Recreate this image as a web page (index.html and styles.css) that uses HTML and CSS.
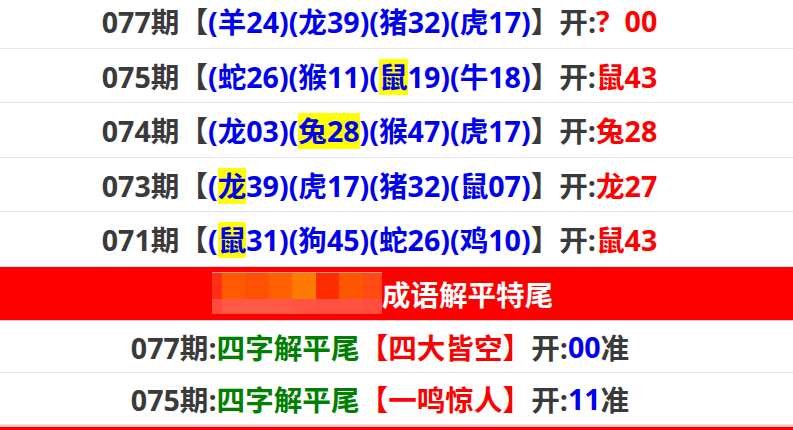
FILE: index.html
```html
<!DOCTYPE html>
<html lang="zh-CN">
<head>
<meta charset="utf-8">
<title>平特尾</title>
<link rel="stylesheet" href="styles.css">
</head>
<body>
<div class="list">
  <div class="row first"><span class="k">077期【</span><span class="b">(羊24)(龙39)(猪32)(虎17)</span><span class="k">】开:</span><span class="r">?&nbsp;&nbsp;00</span></div>
  <div class="row"><span class="k">075期【</span><span class="b">(蛇26)(猴11)(<span class="hl">鼠</span>19)(牛18)</span><span class="k">】开:</span><span class="r">鼠43</span></div>
  <div class="row"><span class="k">074期【</span><span class="b">(龙03)(<span class="hl">兔28</span>)(猴47)(虎17)</span><span class="k">】开:</span><span class="r">兔28</span></div>
  <div class="row"><span class="k">073期【</span><span class="b">(<span class="hl">龙</span>39)(虎17)(猪32)(鼠07)</span><span class="k">】开:</span><span class="r">龙27</span></div>
  <div class="row"><span class="k">071期【</span><span class="b">(<span class="hl">鼠</span>31)(狗45)(蛇26)(鸡10)</span><span class="k">】开:</span><span class="r">鼠43</span></div>
  <div class="banner">
    <span class="mosaic">
      <span class="mline"></span>
      <span class="mrow top">
        <i class="c0"></i><i class="c1"></i><i class="c2"></i><i class="c3"></i><i class="c4"></i><i class="c5"></i><i class="c6"></i><i class="c7"></i>
      </span>
      <span class="mrow bot">
        <i class="d0"></i><i class="d1"></i><i class="d2"></i><i class="d3"></i><i class="d4"></i><i class="d5"></i><i class="d6"></i><i class="d7"></i>
      </span>
    </span><span class="btext">成语解平特尾</span>
  </div>
  <div class="row small"><span class="k">077期:</span><span class="g">四字解平尾</span><span class="r">【四大皆空】</span><span class="k">开:</span><span class="b">00</span><span class="k">准</span></div>
  <div class="row small"><span class="k">075期:</span><span class="g">四字解平尾</span><span class="r">【一鸣惊人】</span><span class="k">开:</span><span class="b">11</span><span class="k">准</span></div>
  <div class="banner next"></div>
</div>
</body>
</html>
```
FILE: styles.css
```css
html, body {
  margin: 0;
  padding: 0;
  background: #ffffff;
  overflow: hidden;
}
.list {
  font-family: "Open Sans", "Noto Sans CJK SC", sans-serif;
  font-weight: 700;
  font-size: 28.6px;
  color: #3a3a3a;
}
.row {
  box-sizing: border-box;
  height: 54.5px;
  border-bottom: 1px solid #e6e6e6;
  display: flex;
  align-items: center;
  justify-content: center;
  padding-right: 34px;
  white-space: nowrap;
}
.row.first {
  margin-top: -6px;
}
.row.small {
  height: 52.3px;
  padding-right: 33px;
}
.k { color: #3a3a3a; }
.b { color: #0000ee; }
.r { color: #ff0000; }
.g { color: #008000; }
.hl {
  display: inline-block;
  background: #ffff00;
  line-height: 36px;
}
.banner {
  box-sizing: border-box;
  height: 54px;
  background: #ff0000;
  border-bottom: 1px solid #f6c6c6;
  display: flex;
  align-items: center;
  justify-content: center;
  padding-right: 28px;
  color: #ffffff;
}
.banner.next {
  border-top: 2px solid #ffc8c8;
  border-bottom: none;
}
.btext {
  color: #ffffff;
}
.mosaic {
  display: flex;
  flex-direction: column;
  width: 170px;
  height: 42px;
}
.mline {
  height: 1px;
  background: #ff9a8a;
}
.mrow {
  display: flex;
}
.mrow.top { height: 26px; }
.mrow.bot { height: 15px; }
.mrow i {
  display: block;
  width: 23.5px;
}
.mrow i.c0, .mrow i.d0 { width: 10px; }
.mrow i.c7, .mrow i.d7 { width: 19px; }
.c0 { background: #ff2e14; }
.c1 { background: #ff5a00; }
.c2 { background: #ff5200; }
.c3 { background: #ff6000; }
.c4 { background: #ff7a00; }
.c5 { background: #ff2c00; }
.c6 { background: #ff5600; }
.c7 { background: #ff4a14; }
.d0 { background: #ff4a3c; }
.d1 { background: #ff5844; }
.d2 { background: #ff5a46; }
.d3 { background: #ff5846; }
.d4 { background: #ff5442; }
.d5 { background: #ff5040; }
.d6 { background: #ff5242; }
.d7 { background: #ff4e40; }
```
